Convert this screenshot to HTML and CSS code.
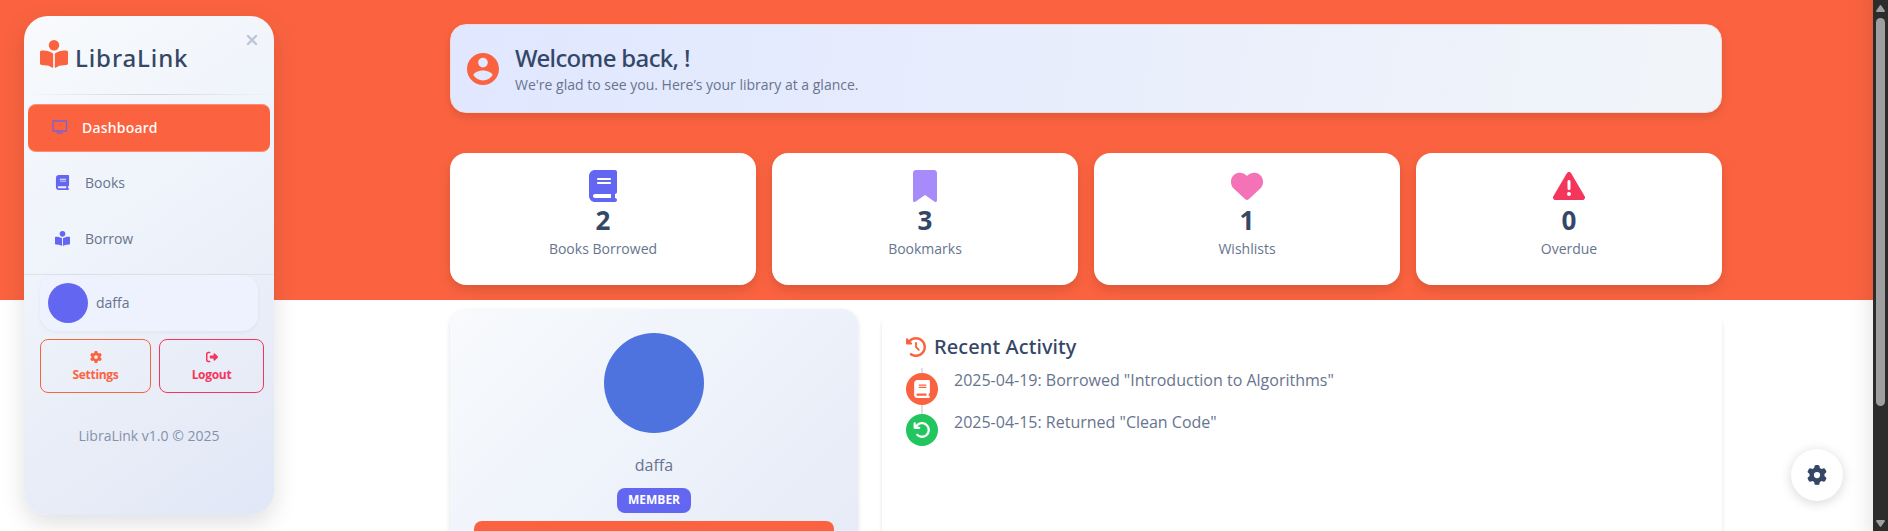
FILE: index.html
```html
<!DOCTYPE html>
<html lang="en">
<head>
<meta charset="utf-8">
<title>LibraLink</title>
<link rel="stylesheet" href="styles.css">
</head>
<body>
<svg class="sprite" aria-hidden="true">
  <symbol id="reader" viewBox="0 0 512 512"><path d="M160 96a96 96 0 1 1 192 0A96 96 0 1 1 160 96zm80 152V512l-48.4-24.2c-20.9-10.4-43.5-17-66.8-19.3l-96-9.6C12.5 457.2 0 443.5 0 427V224c0-17.7 14.3-32 32-32H62.3c63.6 0 125.6 19.6 177.7 56zm32 264V248c52.1-36.4 114.1-56 177.7-56H480c17.7 0 32 14.3 32 32V427c0 16.4-12.5 30.2-28.8 31.8l-96 9.6c-23.2 2.3-45.9 8.9-66.8 19.3L272 512z"/></symbol>
  <symbol id="book" viewBox="0 0 448 512"><path d="M96 0C43 0 0 43 0 96V416c0 53 43 96 96 96H384h32c17.7 0 32-14.3 32-32s-14.3-32-32-32V384c17.7 0 32-14.3 32-32V32c0-17.7-14.3-32-32-32H384 96zm0 384H352v64H96c-17.7 0-32-14.3-32-32s14.3-32 32-32zm32-240c0-8.8 7.2-16 16-16H336c8.8 0 16 7.2 16 16s-7.2 16-16 16H144c-8.8 0-16-7.2-16-16zm16 48H336c8.8 0 16 7.2 16 16s-7.2 16-16 16H144c-8.8 0-16-7.2-16-16s7.2-16 16-16z"/></symbol>
  <symbol id="bookmark" viewBox="0 0 384 512"><path d="M0 48V487.7C0 501.1 10.9 512 24.3 512c5 0 9.9-1.5 14-4.4L192 400 345.7 507.6c4.1 2.9 9 4.4 14 4.4c13.4 0 24.3-10.9 24.3-24.3V48c0-26.5-21.5-48-48-48H48C21.5 0 0 21.5 0 48z"/></symbol>
  <symbol id="heart" viewBox="0 0 512 512"><path d="M47.6 300.4L228.3 469.1c7.5 7 17.4 10.9 27.7 10.9s20.2-3.9 27.7-10.9L464.4 300.4c30.4-28.3 47.6-68 47.6-109.5v-5.8c0-69.9-50.5-129.5-119.4-141C347 36.5 300.6 51.4 268 84L256 96 244 84c-32.6-32.6-79-47.5-124.6-39.9C50.5 55.6 0 115.2 0 185.1v5.8c0 41.5 17.2 81.2 47.6 109.5z"/></symbol>
  <symbol id="warning" viewBox="0 0 512 512"><path d="M256 32c14.2 0 27.3 7.5 34.5 19.8l216 368c7.3 12.4 7.3 27.7 .2 40.1S486.3 480 472 480H40c-14.3 0-27.6-7.7-34.7-20.1s-7-27.8 .2-40.1l216-368C228.7 39.5 241.8 32 256 32zm0 128c-13.3 0-24 10.7-24 24V296c0 13.3 10.7 24 24 24s24-10.7 24-24V184c0-13.3-10.7-24-24-24zm32 224a32 32 0 1 0 -64 0 32 32 0 1 0 64 0z"/></symbol>
  <symbol id="gear" viewBox="0 0 512 512"><path d="M495.9 166.6c3.2 8.7 .5 18.4-6.4 24.6l-43.3 39.4c1.1 8.3 1.7 16.8 1.7 25.4s-.6 17.1-1.7 25.4l43.3 39.4c6.9 6.2 9.6 15.9 6.4 24.6c-4.4 11.9-9.7 23.3-15.8 34.3l-4.7 8.1c-6.6 11-14 21.4-22.1 31.2c-5.9 7.2-15.7 9.6-24.5 6.8l-55.7-17.7c-13.4 10.3-28.2 18.9-44 25.4l-12.5 57.1c-2 9.1-9 16.3-18.2 17.8c-13.8 2.3-28 3.5-42.5 3.5s-28.7-1.2-42.5-3.5c-9.2-1.5-16.2-8.7-18.2-17.8l-12.5-57.1c-15.8-6.5-30.6-15.1-44-25.4L83.1 425.9c-8.8 2.8-18.6 .3-24.5-6.8c-8.1-9.8-15.5-20.2-22.1-31.2l-4.7-8.1c-6.1-11-11.4-22.4-15.8-34.3c-3.2-8.7-.5-18.4 6.4-24.6l43.3-39.4C64.6 273.1 64 264.6 64 256s.6-17.1 1.7-25.4L22.4 191.2c-6.9-6.2-9.6-15.9-6.4-24.6c4.4-11.9 9.7-23.3 15.8-34.3l4.7-8.1c6.6-11 14-21.4 22.1-31.2c5.9-7.2 15.7-9.6 24.5-6.8l55.7 17.7c13.4-10.3 28.2-18.9 44-25.4l12.5-57.1c2-9.1 9-16.3 18.2-17.8C227.3 1.2 241.5 0 256 0s28.7 1.2 42.5 3.5c9.2 1.5 16.2 8.7 18.2 17.8l12.5 57.1c15.8 6.5 30.6 15.1 44 25.4l55.7-17.7c8.8-2.8 18.6-.3 24.5 6.8c8.1 9.8 15.5 20.2 22.1 31.2l4.7 8.1c6.1 11 11.4 22.4 15.8 34.3zM256 336a80 80 0 1 0 0-160 80 80 0 1 0 0 160z"/></symbol>
  <symbol id="history" viewBox="0 0 512 512"><path d="M75 75L41 41C25.9 25.9 0 36.6 0 57.9V168c0 13.3 10.7 24 24 24H134.1c21.4 0 32.1-25.9 17-41l-30.8-30.8C155 85.5 203 64 256 64c106 0 192 86 192 192s-86 192-192 192c-40.8 0-78.6-12.7-109.7-34.4c-14.5-10.1-34.4-6.6-44.6 7.9s-6.6 34.4 7.9 44.6C151.2 495 201.7 512 256 512c141.4 0 256-114.6 256-256S397.4 0 256 0C185.3 0 121.3 28.7 75 75zm181 53c-13.3 0-24 10.7-24 24V256c0 6.4 2.5 12.5 7 17l72 72c9.4 9.4 24.6 9.4 33.9 0s9.4-24.6 0-33.9l-65-65V152c0-13.3-10.7-24-24-24z"/></symbol>
  <symbol id="undo" viewBox="0 0 512 512"><path d="M125.7 160H176c17.7 0 32 14.3 32 32s-14.3 32-32 32H48c-17.7 0-32-14.3-32-32V64c0-17.7 14.3-32 32-32s32 14.3 32 32v51.2L97.6 97.6c87.5-87.5 229.3-87.5 316.8 0s87.5 229.3 0 316.8s-229.3 87.5-316.8 0c-12.5-12.5-12.5-32.8 0-45.3s32.8-12.5 45.3 0c62.5 62.5 163.8 62.5 226.3 0s62.5-163.8 0-226.3s-163.8-62.5-226.3 0L125.7 160z"/></symbol>
  <symbol id="logout" viewBox="0 0 512 512"><path d="M377.9 105.9L500.7 228.7c7.2 7.2 11.3 17.1 11.3 27.3s-4.1 20.1-11.3 27.3L377.9 406.1c-6.4 6.4-15 9.9-24 9.9c-18.7 0-33.9-15.2-33.9-33.9l0-62.1-128 0c-17.7 0-32-14.3-32-32l0-64c0-17.7 14.3-32 32-32l128 0 0-62.1c0-18.7 15.2-33.9 33.9-33.9c9 0 17.6 3.6 24 9.9zM160 96L96 96c-17.7 0-32 14.3-32 32l0 256c0 17.7 14.3 32 32 32l64 0c17.7 0 32 14.3 32 32s-14.3 32-32 32l-64 0c-53 0-96-43-96-96L0 128C0 75 43 32 96 32l64 0c17.7 0 32 14.3 32 32s-14.3 32-32 32z"/></symbol>
  <symbol id="account" viewBox="2 2 20 20"><path d="M12 2C6.48 2 2 6.48 2 12s4.48 10 10 10 10-4.48 10-10S17.52 2 12 2zm0 3c1.66 0 3 1.34 3 3s-1.34 3-3 3-3-1.34-3-3 1.34-3 3-3zm0 14.2c-2.5 0-4.71-1.28-6-3.22.03-1.99 4-3.08 6-3.08 1.99 0 5.97 1.09 6 3.08-1.29 1.94-3.5 3.22-6 3.22z"/></symbol>
</svg>

<div class="window">
  <div class="page">
    <aside class="sidebar">
      <header class="brand">
        <svg class="brand-icon"><use href="#reader"/></svg>
        <span class="brand-name">LibraLink</span>
        <svg class="close" viewBox="0 0 12 12"><path d="M2 2l8 8M10 2l-8 8"/></svg>
      </header>
      <hr class="divider">
      <nav class="nav">
        <a class="nav-item active">
          <svg class="tv" viewBox="0 0 16 14"><path d="M1 1h13.5v10H1z"/><path d="M4.5 12.9h6.5"/></svg>
          <span>Dashboard</span>
        </a>
        <a class="nav-item"><svg class="nav-icon"><use href="#book"/></svg><span>Books</span></a>
        <a class="nav-item"><svg class="nav-icon"><use href="#reader"/></svg><span>Borrow</span></a>
      </nav>
      <footer class="side-footer">
        <div class="user"><span class="avatar"></span><span>daffa</span></div>
        <div class="actions">
          <a class="action settings"><svg><use href="#gear"/></svg><span>Settings</span></a>
          <a class="action logout"><svg><use href="#logout"/></svg><span>Logout</span></a>
        </div>
        <p class="version">LibraLink v1.0 © 2025</p>
      </footer>
    </aside>

    <main class="main">
      <section class="welcome">
        <svg class="welcome-icon"><use href="#account"/></svg>
        <div>
          <h1>Welcome back, !</h1>
          <p>We're glad to see you. Here’s your library at a glance.</p>
        </div>
      </section>

      <section class="stats">
        <div class="stat"><svg class="indigo"><use href="#book"/></svg><strong>2</strong><span>Books Borrowed</span></div>
        <div class="stat"><svg class="violet"><use href="#bookmark"/></svg><strong>3</strong><span>Bookmarks</span></div>
        <div class="stat"><svg class="pink"><use href="#heart"/></svg><strong>1</strong><span>Wishlists</span></div>
        <div class="stat"><svg class="red"><use href="#warning"/></svg><strong>0</strong><span>Overdue</span></div>
      </section>

      <section class="details">
        <div class="profile">
          <span class="profile-avatar"></span>
          <p class="profile-name">daffa</p>
          <span class="badge">MEMBER</span>
          <a class="profile-button"></a>
        </div>
        <div class="activity">
          <h2><svg><use href="#history"/></svg>Recent Activity</h2>
          <ul class="timeline">
            <li><span class="dot borrowed"><svg><use href="#book"/></svg></span><span class="event">2025-04-19: Borrowed "Introduction to Algorithms"</span></li>
            <li><span class="dot returned"><svg><use href="#undo"/></svg></span><span class="event">2025-04-15: Returned "Clean Code"</span></li>
          </ul>
        </div>
      </section>
    </main>

    <div class="drawer"></div>
    <a class="fab"><svg><use href="#gear"/></svg></a>
  </div>

  <div class="scrollbar">
    <svg viewBox="0 0 9 7"><path d="M3.8.4Q4.5-.4 5.2.4L8.8 5.8Q9 7 8 7H1Q0 7 .2 5.8z"/></svg>
    <div class="track"><div class="thumb"></div></div>
    <svg class="down" viewBox="0 0 9 7"><path d="M3.8.4Q4.5-.4 5.2.4L8.8 5.8Q9 7 8 7H1Q0 7 .2 5.8z"/></svg>
  </div>
</div>
</body>
</html>
```
FILE: styles.css
```css
* { box-sizing: border-box; }
body {
  margin: 0;
  font-family: "Open Sans", sans-serif;
  font-size: 16px;
  line-height: 1.5;
  color: #67748e;
  overflow: hidden;
}
h1, h2, p, ul { margin: 0; padding: 0; }
svg { display: block; fill: currentColor; flex: none; }
.sprite { position: absolute; width: 0; height: 0; }

.window { display: flex; width: 1888px; height: 531px; }
.page {
  position: relative;
  display: flex;
  width: 1873px;
  overflow: hidden;
  background: linear-gradient(#fb6340 300px, #fff 300px);
}

/* Sidebar */
.sidebar {
  display: flex;
  flex-direction: column;
  width: 250px;
  height: 499px;
  margin: 16px 0 0 24px;
  border-radius: 24px;
  background: linear-gradient(145deg, #f8fafc 0%, #f0f4fb 35%, #e8ecf7 75%, #e0e7f7 100%);
  box-shadow: 0 8px 24px rgba(0, 0, 0, .13);
}
.brand { position: relative; display: flex; height: 78px; padding: 24px 16px 0; }
.brand-icon { width: 28px; height: 28px; color: #fb6340; }
.brand-name {
  margin: -2px 0 0 7px;
  font-family: "Noto Sans", "Open Sans", sans-serif;
  font-size: 24px;
  font-weight: 500;
  line-height: 39px;
  letter-spacing: .9px;
  color: #344767;
}
.close {
  position: absolute;
  top: 18px;
  right: 16px;
  width: 12px;
  height: 12px;
  stroke: #bdc5d4;
  stroke-width: 2.4;
  stroke-linecap: round;
}
.divider {
  width: 100%;
  height: 1px;
  margin: 0;
  border: 0;
  background: linear-gradient(90deg, transparent, #d3d5d9, transparent);
}
.nav { padding: 9px 4px 0; }
.nav-item {
  display: flex;
  align-items: center;
  height: 56px;
  padding-left: 27px;
  font-size: 14px;
}
.nav-item span { margin-left: 15px; }
.nav-item.active {
  height: 48px;
  margin-bottom: 2px;
  padding: 0 0 2px 24px;
  border: 1px solid #fd8d70;
  border-width: 1px 0;
  border-radius: 8px;
  background: #fb6340;
  color: #fff;
  font-family: "Noto Sans", "Open Sans", sans-serif;
  font-weight: 500;
  letter-spacing: .25px;
}
.active span { margin-left: 14px; }
.nav-icon { width: 15px; height: 15px; color: #6366f1; }
.tv { width: 16px; height: 14px; fill: none; stroke: #7b61d2; stroke-width: 1.3; }
.side-footer { margin-top: 8px; border-top: 1px solid #e0e2e7; font-size: 14px; }
.user {
  display: flex;
  align-items: center;
  width: 218px;
  height: 56px;
  margin-left: 16px;
  padding-left: 8px;
  gap: 8px;
  border-radius: 16px;
  background: #eef2ff;
  box-shadow: 0 1px 4px rgba(0, 0, 0, .05);
}
.user span:last-child { padding-bottom: 1px; }
.avatar { width: 40px; height: 40px; border-radius: 50%; background: #6366f1; }
.actions { display: flex; gap: 8px; margin: 8px 0 0 16px; }
.action {
  display: flex;
  flex-direction: column;
  align-items: center;
  height: 54px;
  padding-top: 11px;
  border: 1px solid;
  border-radius: 8px;
  font-size: 12px;
  font-weight: 700;
  line-height: 18px;
  letter-spacing: -.3px;
}
.action svg { width: 12px; height: 12px; margin-bottom: 3px; }
.settings { width: 111px; color: #fb6340; }
.logout { width: 105px; color: #f5365c; }
.version { margin-top: 32px; text-align: center; color: #8392ab; }

/* Main column */
.main { width: 1272px; margin: 24px 0 0 176px; }
.welcome {
  display: flex;
  align-items: center;
  height: 89px;
  padding-left: 16px;
  gap: 16px;
  border: 1px solid #f3d8d9;
  border-radius: 16px;
  background: linear-gradient(100deg, #e0e7ff, #f1f5f9);
  box-shadow: 0 4px 10px rgba(0, 0, 0, .12);
}
.welcome-icon { width: 32px; height: 32px; color: #fb6340; }
.welcome h1 {
  font-family: "Noto Sans", "Open Sans", sans-serif;
  font-size: 24px;
  font-weight: 500;
  line-height: 32px;
  letter-spacing: -.65px;
  color: #344767;
}
.welcome p { font-size: 14px; line-height: 21px; }
.stats { display: grid; grid-template-columns: repeat(4, 1fr); gap: 16px; margin-top: 40px; }
.stat {
  display: flex;
  flex-direction: column;
  align-items: center;
  height: 132px;
  padding-top: 17px;
  border-radius: 16px;
  background: #fff;
  box-shadow: 0 5px 12px rgba(0, 0, 0, .13);
  font-size: 14px;
  line-height: 21px;
}
.stat svg { width: 32px; height: 32px; }
.stat strong { font-size: 26px; font-weight: 700; line-height: 36px; color: #344767; }
.indigo { color: #6366f1; }
.violet { color: #a78bfa; }
.pink { color: #f472b6; }
.red { color: #f5365c; }

.details { display: flex; gap: 24px; margin-top: 24px; }
.profile {
  display: flex;
  flex-direction: column;
  align-items: center;
  width: 408px;
  height: 300px;
  padding: 24px 24px 0;
  border-radius: 16px;
  background: linear-gradient(135deg, #f8fafc, #f0f4fb 38%, #e5e9f6);
  box-shadow: 0 2px 5px rgba(0, 0, 0, .12);
}
.profile-avatar { width: 100px; height: 100px; border-radius: 50%; background: #4e73df; }
.profile-name { margin-top: 20px; }
.badge {
  height: 25px;
  margin-top: 11px;
  padding: 0 11px;
  border-radius: 8px;
  background: #6366f1;
  color: #fff;
  font-size: 12px;
  font-weight: 700;
  line-height: 24px;
}
.profile-button { width: 360px; height: 40px; margin-top: 8px; border-radius: 8px; background: #fb6340; }
.activity {
  width: 840px;
  height: 300px;
  padding: 24px;
  border-radius: 16px;
  background: #fff;
  box-shadow: 0 4px 4px rgba(0, 0, 0, .11);
}
.activity h2 {
  display: flex;
  align-items: center;
  gap: 8px;
  font-family: "Noto Sans", "Open Sans", sans-serif;
  font-size: 20px;
  font-weight: 500;
  line-height: 28px;
  letter-spacing: .1px;
  color: #344767;
}
.activity h2 svg { width: 20px; height: 20px; color: #fb6340; }
.timeline {
  list-style: none;
  margin-top: 7px;
  background: linear-gradient(#dee2e6, #dee2e6) 15px 0 / 2px 70px no-repeat;
}
.timeline li { display: flex; gap: 16px; height: 41px; }
.dot {
  display: grid;
  place-items: center;
  width: 32px;
  height: 32px;
  margin-top: 5px;
  border-radius: 50%;
  color: #fff;
}
.dot svg { width: 18px; height: 18px; }
.borrowed { background: #fb6340; }
.returned { background: #22c55e; }
.event { line-height: 24px; }
.timeline li + li .event { padding-top: 1px; }

/* Edge shadow of the closed settings drawer */
.drawer {
  position: absolute;
  top: -20px;
  left: 1873px;
  width: 100px;
  height: 571px;
  box-shadow: 0 0 24px rgba(0, 0, 0, .13);
}
.fab {
  position: absolute;
  left: 1791px;
  top: 449px;
  display: grid;
  place-items: center;
  width: 52px;
  height: 52px;
  border-radius: 50%;
  background: #fff;
  color: #344767;
  box-shadow: 0 2px 12px rgba(0, 0, 0, .16);
}
.fab svg { width: 20px; height: 20px; }

.scrollbar {
  display: flex;
  flex-direction: column;
  align-items: center;
  width: 15px;
  padding: 5px 0 4px;
  background: #2c2c2c;
  color: #9f9f9f;
}
.scrollbar svg { width: 9px; height: 7px; }
.scrollbar .down { transform: rotate(180deg); }
.track { flex: 1; padding-top: 6px; }
.thumb { width: 9px; height: 388px; border-radius: 5px; background: #9f9f9f; }
```
